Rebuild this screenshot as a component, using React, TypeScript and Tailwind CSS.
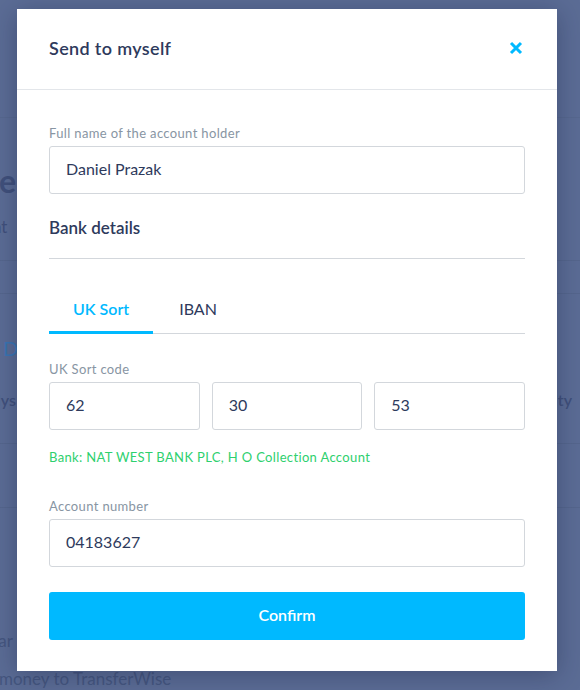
import React from "react";

const font = { fontFamily: "Lato, 'Open Sans', sans-serif" };

function Field({ value }: { value: string }) {
  return (
    <div className="h-[48px] rounded-[3px] border border-[#d3d7dc] bg-white flex items-center px-[16px] pb-[2px] text-[16px] text-[#2e3a5c]">
      {value}
    </div>
  );
}

function Label({ children }: { children: React.ReactNode }) {
  return (
    <div className="text-[13px] leading-[18px] text-[#8895a3] tracking-[0.35px] mb-[4px]">{children}</div>
  );
}

export default function App() {
  return (
    <div className="relative w-[580px] h-[690px] overflow-hidden bg-[#5b6c95]" style={font}>
      {/* dimmed page behind */}
      <div className="flex flex-col w-[580px] h-[690px] text-[#40507b]">
        <div className="h-[120px] border-b border-[#57688f]" />
        <div className="h-[145px] border-b border-[#55668d] flex flex-col">
          <div className="mt-[45px] ml-[-20px] text-[32px] font-bold leading-[36px]">Pe</div>
          <div className="mt-[18px] ml-[-8px] text-[17px] leading-[20px]">nt</div>
        </div>
        <div className="h-[33px] border-b border-[#55668d]" />
        <div className="h-[152px] border-b border-[#55668d] flex flex-col">
          <div className="mt-[42px] ml-[3px] text-[20px] leading-[24px] text-[#3a75b3]">D</div>
          <div className="mt-[30px] flex justify-between leading-[20px] text-[16px] font-semibold">
            <span className="ml-[-14px]">Mys</span>
            <span className="mr-[8px]">ity</span>
          </div>
        </div>
        <div className="h-[65px] border-b border-[#55668d]" />
        <div className="flex flex-col text-[17px] leading-[22px] text-[#45567f]">
          <div className="mt-[122px] ml-[-16px]">Trar</div>
          <div className="mt-[16px] ml-[-1px]">money to TransferWise</div>
        </div>
      </div>

      {/* modal overlay */}
      <div className="absolute inset-0 flex justify-start pl-[17px] pt-[9px]">
        <div className="w-[540px] h-[662px] bg-white shadow-[0_4px_24px_rgba(20,30,60,0.35)] flex flex-col">
          <div className="h-[81px] border-b border-[#e3e6ea] flex items-center justify-between px-[32px] pt-[2px] shrink-0">
            <div className="text-[18px] font-semibold text-[#2e3a5c] tracking-[0.35px] -mt-[4px]">Send to myself</div>
            <svg width="14" height="14" viewBox="0 0 14 14" className="-mt-[4px] mr-[2px]">
              <path d="M2 2 L12 12 M12 2 L2 12" stroke="#00b9ff" strokeWidth="3" strokeLinecap="butt" />
            </svg>
          </div>
          <div className="px-[32px] pt-[34px] flex flex-col">
            <Label>Full name of the account holder</Label>
            <Field value="Daniel Prazak" />
            <div className="mt-[22px] text-[17px] leading-[24px] font-semibold text-[#2e3a5c]">Bank details</div>
            <div className="mt-[18px] h-px bg-[#d3d7dc]" />
            <div className="mt-[38px] flex border-b border-[#d3d7dc]">
              <div className="px-[24px] pb-[10px] leading-[24px] text-[16px] font-semibold text-[#00b9ff] border-b-[3px] border-[#00b9ff] -mb-px">
                UK Sort
              </div>
              <div className="px-[26px] pb-[10px] leading-[24px] text-[16px] text-[#2e3a5c] border-b-[3px] border-transparent -mb-px">
                IBAN
              </div>
            </div>
            <div className="mt-[26px]">
              <Label>UK Sort code</Label>
            </div>
            <div className="grid grid-cols-3 gap-[12px]">
              <Field value="62" />
              <Field value="30" />
              <Field value="53" />
            </div>
            <div className="mt-[18px] text-[13px] leading-[18px] text-[#2ed06e] tracking-[0.35px]">
              Bank: NAT WEST BANK PLC, H O Collection Account
            </div>
            <div className="mt-[31px]">
              <Label>Account number</Label>
            </div>
            <Field value="04183627" />
            <button className="mt-[25px] h-[48px] rounded-[3px] bg-[#00b9ff] text-white text-[16px] font-semibold pb-[3px]">
              Confirm
            </button>
          </div>
        </div>
      </div>
    </div>
  );
}
